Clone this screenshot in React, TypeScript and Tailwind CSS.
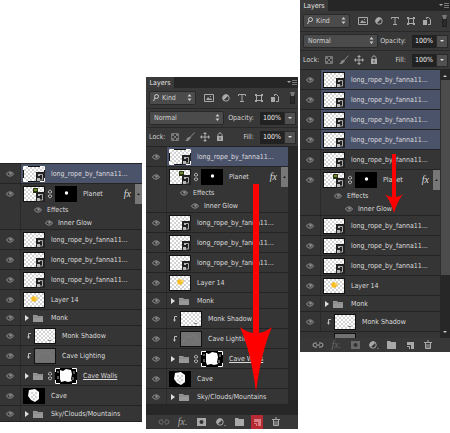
import type { ReactNode } from "react";

type LayerKind = "rope" | "planet" | "sun" | "group" | "shadow" | "lighting" | "walls" | "cave";

interface Layer {
  name: string;
  kind: LayerKind;
  selected?: boolean;
}

const rope = (selected = false): Layer => ({ name: "long_rope_by_fanna11...", kind: "rope", selected });

const lowerLayers: Layer[] = [
  { name: "Planet", kind: "planet" },
  rope(),
  rope(),
  rope(),
  { name: "Layer 14", kind: "sun" },
  { name: "Monk", kind: "group" },
  { name: "Monk Shadow", kind: "shadow" },
  { name: "Cave Lighting", kind: "lighting" },
  { name: "Cave Walls", kind: "walls" },
  { name: "Cave", kind: "cave" },
  { name: "Sky/Clouds/Mountains", kind: "group" },
];

const fullStack = [rope(true), ...lowerLayers];
const selectedStack = [rope(true), rope(true), rope(true), rope(true), rope(), ...lowerLayers.slice(0, 7)];

function Eye({ label }: { label: string }) {
  return (
    <button type="button" aria-label={`Toggle visibility of ${label}`} className="shrink-0">
      <svg width="8" height="6" viewBox="0 0 8 6" fill="none" className="text-[#8f8f8f]">
        <path d="M.5 3C1.8.3 6 .1 7.5 3 6 5.8 2 5.8.5 3Z" stroke="currentColor" />
        <circle cx="4.500" cy="2.500" r="1.300" fill="currentColor" />
      </svg>
    </button>
  );
}

function Checker() {
  const cells = [];
  for (let y = 0; y < 7; y++) {
    for (let x = 0; x < 10; x++) {
      if ((x + y) % 2) cells.push(<rect key={`${x}-${y}`} x={1 + x * 2} y={1 + y * 2} width="2" height="2" fill="#d4d4d4" />);
    }
  }
  return (
    <>
      <rect width="22" height="16" fill="#111" />
      <rect x="1" y="1" width="20" height="14" fill="#fff" />
      {cells}
    </>
  );
}

function Thumb({ kind, framed }: { kind: LayerKind; framed?: boolean }) {
  return (
    <svg width="22" height="16" viewBox="0 0 22 16" className="shrink-0" aria-hidden="true">
      {kind !== "lighting" && kind !== "cave" && <Checker />}
      {kind === "planet" && (
        <>
          <path d="M10 2h5v5h-5z" fill="#2c3813" />
          <path d="M11 3h3v2h-3z" fill="#6f8a2b" />
        </>
      )}
      {(kind === "rope" || kind === "planet") && (
        <>
          <path d="M13 6h9v10h-9z" fill="#222" />
          <path d="M16 8.500h3.500V14H17" stroke="#a8a8a8" fill="none" />
          <path d="M14 12h3v3h-3zM15 8h2v2h-2z" fill="#b8b8b8" />
        </>
      )}
      {kind === "sun" && (
        <>
          <circle cx="11" cy="7" r="2.800" fill="#f7bd22" />
          <path d="M12 5h3v2h-3z" fill="#f9d66d" />
        </>
      )}
      {kind === "shadow" && <path d="M14 12h3v1h-3z" fill="#888" />}
      {kind === "lighting" && (
        <>
          <path d="M0 0h22v16H0z" fill="#111" />
          <path d="M1 1h20v14H1z" fill="#727272" />
          <path d="M3 11l3-6 4 1 4-2 5 7" stroke="#7a7a7a" fill="none" />
        </>
      )}
      {kind === "cave" && (
        <>
          <path d="M0 0h22v16H0z" fill="#000" />
          <path d="M6 2l6-1 4 3v7l-4 3-4-2-3-4z" fill="#fafafa" />
          <path d="M8 4h2v2H8zM12 4h2v2h-2zM10 6h2v2h-2zM8 8h2v2H8zM12 8h2v2h-2zM10 10h2v2h-2z" fill="#d4d4d4" />
        </>
      )}
      {framed && <path d="M.5 4V.5H5M17 .5h4.500V4M.5 12v3.500H5M17 15.500h4.500V12" stroke="#fff" fill="none" />}
    </svg>
  );
}

function Mask({ kind }: { kind: LayerKind }) {
  return (
    <svg width="22" height="16" viewBox="0 0 22 16" className="shrink-0" aria-hidden="true">
      <path d="M0 0h22v16H0z" fill="#000" />
      {kind === "planet" ? (
        <circle cx="11.500" cy="7" r="1.700" fill="#fff" />
      ) : (
        <>
          <path d="M5 2l3 1 3-2 5 1 1 4-1 5 1 2-4 1-3-1-4 1-1-3z" fill="#fff" />
          <path d="M3 3v2M3 8v3M19 3v3M18 9v3" stroke="#aaa" />
          <path d="M.5 4V.5H5M17 .5h4.500V4M.5 12v3.500H5M17 15.500h4.500V12" stroke="#fff" fill="none" />
        </>
      )}
    </svg>
  );
}

function Chain() {
  return (
    <svg width="6" height="10" viewBox="0 0 6 10" fill="none" stroke="#aaa" className="shrink-0" aria-hidden="true">
      <path d="M1.500 4V2Q3 0 4.500 2v2M1.500 6v2Q3 10 4.500 8V6M3 3v4" />
    </svg>
  );
}

function Folder() {
  return (
    <svg width="10" height="8" viewBox="0 0 10 8" className="shrink-0" aria-hidden="true">
      <path d="M0 1h4l1 1h5v6H0z" fill="#989898" />
      <path d="M0 3h10" stroke="#777" strokeWidth=".5" />
    </svg>
  );
}

function Triangle() {
  return (
    <svg width="4" height="6" viewBox="0 0 4 6" className="shrink-0" aria-hidden="true">
      <path d="M0 0l4 3-4 3z" fill="#ddd" />
    </svg>
  );
}

function ClipArrow() {
  return (
    <svg width="4" height="6" viewBox="0 0 4 6" className="shrink-0" aria-hidden="true">
      <path d="M4 .5H1.500V4" stroke="#bbb" fill="none" />
      <path d="M0 3.500h3L1.500 6z" fill="#bbb" />
    </svg>
  );
}

function LayerRow({ layer, framed }: { layer: Layer; framed: boolean }) {
  const { name, kind, selected } = layer;
  const clipped = kind === "shadow" || kind === "lighting";
  const folder = kind === "group" || kind === "walls";
  const masked = kind === "planet" || kind === "walls";

  return (
    <li className="border-b border-[#242424]">
      <div className={kind === "group" ? "flex h-[15px]" : kind === "planet" ? "flex h-5" : "flex h-[19px]"}>
        <div className="flex w-[21px] shrink-0 items-center justify-center border-r border-[#2a2a2a]">
          <Eye label={name} />
        </div>
        <div className={selected ? "flex min-w-0 grow items-center bg-[#4b536b] pl-[2px]" : "flex min-w-0 grow items-center pl-[2px]"}>
          {clipped && (
            <span className="flex w-[11px] shrink-0 justify-center">
              <ClipArrow />
            </span>
          )}
          {folder ? (
            <span className="flex w-[22px] shrink-0 items-center gap-1 pl-[2px]">
              <Triangle />
              <Folder />
            </span>
          ) : (
            <Thumb kind={kind} framed={selected && framed} />
          )}
          {masked && (
            <span className="ml-[2px] flex shrink-0 items-center gap-[2px]">
              <Chain />
              <Mask kind={kind} />
            </span>
          )}
          <span className={kind === "walls" ? "ml-[6px] whitespace-nowrap underline" : "ml-[6px] whitespace-nowrap"}>{name}</span>
          {kind === "planet" && (
            <span className="ml-auto flex h-full items-center gap-1">
              <i className="font-['Liberation_Serif',serif] text-[10px]">fx</i>
              <button type="button" aria-label="Collapse effects" className="flex h-full w-[7px] items-center justify-center bg-[#777]">
                <svg width="3" height="2" viewBox="0 0 3 2">
                  <path d="M0 2L1.500 0 3 2z" fill="#222" />
                </svg>
              </button>
            </span>
          )}
        </div>
      </div>
      {kind === "planet" && (
        <ul className="ml-5 border-l border-[#2a2a2a]">
          <li className="flex h-3 items-center gap-[5px] pl-[13px]">
            <Eye label="Effects" />
            Effects
          </li>
          <li className="flex h-[13px] items-center gap-[5px] pl-6">
            <Eye label="Inner Glow" />
            Inner Glow
          </li>
        </ul>
      )}
    </li>
  );
}

function LayerList({ layers }: { layers: Layer[] }) {
  // Corner brackets only show while a single layer is active
  const framed = layers.filter((layer) => layer.selected).length === 1;
  return (
    <ul className="min-w-0 grow bg-[#353535]">
      {layers.map((layer, i) => (
        <LayerRow key={i} layer={layer} framed={framed} />
      ))}
    </ul>
  );
}

function Stepper() {
  return (
    <svg width="5" height="7" viewBox="0 0 5 7" className="pointer-events-none absolute top-[3px] right-1" aria-hidden="true">
      <path d="M.5 2.500l2-2.500 2 2.500zM.5 4.500l2 2.500 2-2.500z" fill="#ccc" />
    </svg>
  );
}

function PercentField({ label }: { label: string }) {
  return (
    <div className="flex items-center">
      <label className="flex items-center gap-[6px]">
        {label}
        <input defaultValue="100%" className="h-[13px] w-6 bg-[#222] text-center text-[#eee]" />
      </label>
      <button type="button" aria-label={`${label} slider`} className="flex h-[13px] w-3 items-center justify-center border border-[#2a2a2a] bg-[#505050]">
        <svg width="4" height="2" viewBox="0 0 4 2">
          <path d="M0 0h4L2 2z" fill="#ddd" />
        </svg>
      </button>
    </div>
  );
}

function IconButton({ label, children, className = "" }: { label: string; children: ReactNode; className?: string }) {
  return (
    <button type="button" aria-label={label} className={`flex shrink-0 items-center justify-center ${className}`}>
      <svg width="12" height="12" viewBox="0 0 12 12" fill="none" stroke="currentColor">
        {children}
      </svg>
    </button>
  );
}

function AdjustmentPaths() {
  return (
    <>
      <circle cx="6" cy="6" r="3.200" />
      <path d="M3.500 8.500A3.500 3.500 0 0 1 8.500 3.500z" fill="currentColor" stroke="none" />
    </>
  );
}

function Toolbar() {
  return (
    <header className="text-[#d4d4d4]">
      <div className="flex h-[11px] items-center justify-between bg-[#262626]">
        <h2 className="flex h-full w-7 items-center justify-center bg-[#3a3a3a] text-[#e6e6e6]">Layers</h2>
        <button type="button" aria-label="Panel menu">
          <svg width="11" height="7" viewBox="0 0 11 7">
            <path d="M0 2h4L2 4z" fill="#aaa" />
            <path d="M5 1.500h5M5 3.500h5M5 5.500h5" stroke="#777" />
          </svg>
        </button>
      </div>
      <div className="flex h-[21px] items-center border-b border-[#292929] pl-[3px]">
        <div className="relative w-[47px] shrink-0">
          <svg width="6" height="8" viewBox="0 0 6 8" fill="none" stroke="#ccc" className="pointer-events-none absolute top-[3px] left-1" aria-hidden="true">
            <circle cx="3.500" cy="2.500" r="2" />
            <path d="M2 4L.5 7" />
          </svg>
          <select aria-label="Filter type" className="block h-[14px] w-full appearance-none rounded-xs border border-[#292929] bg-[#4b4b4b] pl-3">
            <option>Kind</option>
          </select>
          <Stepper />
        </div>
        <div className="ml-[7px] flex grow items-center justify-between pr-[9px] text-[#a9a9a9]">
          <IconButton label="Filter pixel layers">
            <path d="M1.500 2.500h9v7h-9z" />
            <path d="M3 8l2-3 2 2 1-1 1 2zM7 4h1v1H7z" fill="currentColor" stroke="none" />
          </IconButton>
          <IconButton label="Filter adjustment layers">
            <AdjustmentPaths />
          </IconButton>
          <IconButton label="Filter type layers">
            <path d="M2.500 4V2.500h7V4M6 2.500v7M4 9.500h4" />
          </IconButton>
          <IconButton label="Filter shape layers">
            <path d="M3.500 3.500h5v5h-5z" />
            <path d="M2 2h2v2H2zM8 2h2v2H8zM2 8h2v2H2zM8 8h2v2H8z" fill="currentColor" stroke="none" />
          </IconButton>
          <IconButton label="Filter smart objects">
            <path d="M5.500 4V2.500h2l2 2v5H7" />
            <path d="M2 5h4v5H2z" fill="currentColor" stroke="none" />
          </IconButton>
        </div>
        <button type="button" aria-label="Layer filtering" className="mr-[3px] h-3 w-[5px] border border-t-4 border-[#222] border-t-[#777] bg-[#2a2a2a]" />
      </div>
      <div className="flex h-[19px] items-center justify-between border-b border-[#292929] pr-[2px] pl-[3px]">
        <div className="relative w-[75px]">
          <select aria-label="Blend mode" className="block h-[14px] w-full appearance-none rounded-xs border border-[#292929] bg-[#4b4b4b] pl-1">
            <option>Normal</option>
          </select>
          <Stepper />
        </div>
        <PercentField label="Opacity:" />
      </div>
      <div className="flex h-[19px] items-center border-b border-[#242424] pr-[2px] pl-[3px]">
        <span className="w-5">Lock:</span>
        <div className="flex gap-[3px] text-[#a9a9a9]">
          <IconButton label="Lock transparent pixels">
            <path d="M2.500 2.500h7v7h-7z" stroke="#777" />
            <path d="M3 3h2v2H3zM7 3h2v2H7zM5 5h2v2H5zM3 7h2v2H3zM7 7h2v2H7z" fill="#777" stroke="none" />
          </IconButton>
          <IconButton label="Lock image pixels">
            <path d="M10.500 1.500L6 6.500" stroke="#888" />
            <path d="M6 5.500L7 7 4 10H1q2-1 2-3z" fill="#888" stroke="none" />
          </IconButton>
          <IconButton label="Lock position">
            <path d="M6 2v8M2 6h8" />
            <path d="M6 1l2 2H4zM6 11L4 9h4zM1 6l2-2v4zM11 6L9 8V4z" fill="currentColor" stroke="none" />
          </IconButton>
          <IconButton label="Lock all">
            <path d="M4 6V3.500Q6 0 8 3.500V6" />
            <path d="M3 5h6v5H3z" fill="currentColor" stroke="none" />
            <path d="M6 6.500v2" stroke="#333" />
          </IconButton>
        </div>
        <div className="ml-auto">
          <PercentField label="Fill:" />
        </div>
      </div>
    </header>
  );
}

function Footer({ pressed = false, multiple = false }: { pressed?: boolean; multiple?: boolean }) {
  const muted = multiple ? "text-[#686868]" : "";
  return (
    <footer className="flex h-[14px] items-center justify-between bg-[#383838] pr-4 pl-3 text-[#a9a9a9]">
      <IconButton label="Link layers" className={multiple ? "" : "text-[#707070]"}>
        <path d="M5 4H3Q1 4 1 6t2 2h2M7 4h2q2 0 2 2T9 8H7M4 6h4" />
      </IconButton>
      <button type="button" aria-label="Add layer style" className={`w-3 font-['Liberation_Serif',serif] text-[10px] leading-3 italic ${muted}`}>
        fx.
      </button>
      <IconButton label="Add layer mask" className={muted}>
        <path d="M2 2h9v8H2z" fill="currentColor" stroke="none" />
        <circle cx="6.500" cy="6" r="2" fill="#333" stroke="none" />
      </IconButton>
      <IconButton label="Add adjustment layer">
        <AdjustmentPaths />
        <path d="M11 9v1" />
      </IconButton>
      <IconButton label="New group">
        <path d="M2 2h3l1 1h5v7H2z" fill="currentColor" stroke="none" />
      </IconButton>
      <IconButton label="New layer" className={pressed ? "h-[14px] bg-[#b52a33] text-[#d98087]" : ""}>
        <path d="M3 3h7v7H7V6H3z" fill="currentColor" stroke="none" />
        <path d="M3 7.500h2.500V10" />
      </IconButton>
      <IconButton label="Delete layer">
        <path d="M2 3.500h8M5 2h2M3.500 4v5.500h5V4M5 5v4M7 5v4" />
      </IconButton>
    </footer>
  );
}

function Panel({ className, children }: { className: string; children: ReactNode }) {
  return <section className={`relative min-w-0 basis-0 bg-[#383838] ${className}`}>{children}</section>;
}

export default function App() {
  return (
    <main className="flex min-h-screen items-start overflow-hidden bg-white font-['DejaVu_Sans_Condensed','Noto_Sans',sans-serif] text-[7px] leading-[10px] text-[#dcdcdc]">
      <Panel className="mt-[163px] mr-1 grow-[142] border-t border-[#242424]">
        <LayerList layers={fullStack} />
      </Panel>

      <Panel className="mt-[77px] mr-[2px] grow-[152]">
        <Toolbar />
        <div className="flex bg-[#272727] pb-[10px]">
          <LayerList layers={fullStack} />
          <div className="w-[10px] shrink-0" />
        </div>
        <Footer pressed />
        <svg width="32" height="208" viewBox="0 0 32 208" className="pointer-events-none absolute top-[107px] left-[94px]" aria-hidden="true">
          <path d="M13 0h6v149q7-1 13-6-11 25-16 65Q11 168 0 143q6 5 13 6z" fill="#f00" />
        </svg>
      </Panel>

      <Panel className="grow-[150]">
        <Toolbar />
        <div className="flex bg-[#272727]">
          <div className="min-w-0 grow">
            <LayerList layers={selectedStack} />
            <div className="flex h-[6px] items-end bg-[#353535]">
              <div className="ml-[34px] h-[5px] w-[22px] border border-b-0 border-[#111] bg-[#727272]" />
            </div>
          </div>
          <div className="flex w-[10px] shrink-0 flex-col items-center">
            <svg width="4" height="10" viewBox="0 0 4 10">
              <path d="M0 7l2-2 2 2z" fill="#ccc" />
            </svg>
            <div className="h-[195px] w-full border-l border-[#2d2d2d] bg-[#4c4c4c]" />
            <svg width="4" height="4" viewBox="0 0 4 4" className="mt-auto mb-1">
              <path d="M0 1h4L2 3z" fill="#ccc" />
            </svg>
          </div>
        </div>
        <Footer multiple />
        <svg width="18" height="61" viewBox="0 0 18 61" className="pointer-events-none absolute top-[154px] left-[85px]" aria-hidden="true">
          <path d="M7 0h4v43q4 0 7-3-6 8-9 19Q6 48 0 40q3 3 7 3z" fill="#f00" />
        </svg>
      </Panel>
    </main>
  );
}
